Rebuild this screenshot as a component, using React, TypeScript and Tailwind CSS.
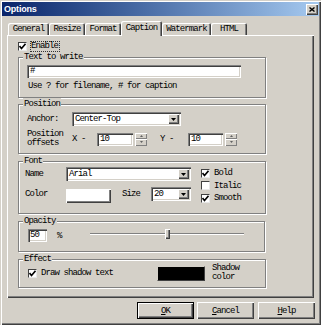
import React from "react";

const raised =
  "shadow-[inset_1px_1px_0_#fff,inset_-1px_-1px_0_#404040,inset_-2px_-2px_0_#808080]";
const sunken =
  "shadow-[inset_1px_1px_0_#808080,inset_2px_2px_0_#404040,inset_-1px_-1px_0_#fff,inset_-2px_-2px_0_#d4d0c8]";

function Check({ checked }: { checked?: boolean }) {
  return (
    <div className="w-[9px] h-[9px] shrink-0 bg-white border-t border-l border-[#404040] border-r-[#e8e8e8] border-b-[#e8e8e8] border-r border-b flex items-center justify-center">
      {checked && (
        <svg width="7" height="7" viewBox="0 0 7 7">
          <path d="M0.5 3 L2.5 5.5 L6.5 0.8" stroke="#000" strokeWidth="1.6" fill="none" />
        </svg>
      )}
    </div>
  );
}

function DropBtn() {
  return (
    <div className={`ml-auto w-[11px] h-[10px] bg-[#d4d0c8] ${raised} flex items-center justify-center`}>
      <svg width="5" height="3" viewBox="0 0 5 3">
        <polygon points="0,0 5,0 2.5,3" fill="#000" />
      </svg>
    </div>
  );
}

function Select({ value, className }: { value: string; className: string }) {
  return (
    <div className={`h-[14px] bg-white ${sunken} flex items-center pl-[3px] pr-[2px] shrink-0 ${className}`}>
      <span className="leading-[10px]">{value}</span>
      <DropBtn />
    </div>
  );
}

function Spinner() {
  return (
    <div className="ml-[2px] w-[12px] h-[13px] flex flex-col shrink-0">
      <div className="h-[6px] bg-[#d4d0c8] shadow-[inset_1px_1px_0_#fff,inset_-1px_-1px_0_#808080] flex items-center justify-center">
        <svg width="3" height="2" viewBox="0 0 3 2">
          <polygon points="0,2 3,2 1.5,0" fill="#606060" />
        </svg>
      </div>
      <div className="h-[7px] bg-[#d4d0c8] shadow-[inset_1px_1px_0_#fff,inset_-1px_-1px_0_#808080] flex items-center justify-center">
        <svg width="3" height="2" viewBox="0 0 3 2">
          <polygon points="0,0 3,0 1.5,2" fill="#606060" />
        </svg>
      </div>
    </div>
  );
}

function Group({
  title,
  className,
  children,
}: {
  title: string;
  className: string;
  children?: React.ReactNode;
}) {
  return (
    <div className={`border border-[#808080] shadow-[1px_1px_0_#fff,inset_1px_1px_0_#fff] ${className}`}>
      <div className="-mt-[7px] ml-[4px] px-[1px] w-fit bg-[#d4d0c8] leading-[12px]">{title}</div>
      {children}
    </div>
  );
}

function Tab({ label, w, selected }: { label: string; w: string; selected?: boolean }) {
  if (selected) {
    return (
      <div
        className={`${w} h-[15px] -mb-[1px] relative z-10 bg-[#d4d0c8] shadow-[inset_1px_1px_0_#fff,inset_-1px_0_0_#404040,inset_-2px_0_0_#808080] rounded-t-[2px] flex items-center justify-center pb-[1px]`}
      >
        {label}
      </div>
    );
  }
  return (
    <div
      className={`${w} h-[12px] bg-[#d4d0c8] shadow-[inset_1px_1px_0_#fff,inset_-1px_0_0_#404040,inset_-2px_0_0_#808080] rounded-t-[2px] flex items-center justify-center`}
    >
      {label}
    </div>
  );
}

function Button({ children, def, className }: { children: React.ReactNode; def?: boolean; className?: string }) {
  return (
    <div
      className={`w-[57px] h-[17px] bg-[#d4d0c8] flex items-center justify-center ${
        def ? "border border-black" : ""
      } ${raised} ${className ?? ""}`}
    >
      {children}
    </div>
  );
}

export default function App() {
  return (
    <div className="w-[321px] h-[325px] bg-[#d4d0c8] p-[2px] shadow-[inset_1px_1px_0_#d4d0c8,inset_2px_2px_0_#fff,inset_-1px_-1px_0_#404040,inset_-2px_-2px_0_#808080] font-['Liberation_Mono',monospace] text-[9px] leading-[12px] tracking-[-0.9px] text-black overflow-hidden">
      {/* Title bar */}
      <div className="h-[14px] flex items-center bg-linear-to-r from-[#0a246a] to-[#a6caf0] pl-[2px] pr-[1px]">
        <span className="font-['Liberation_Sans',Arial,sans-serif] font-bold text-[9px] tracking-[-0.2px] text-white leading-[14px]">
          Options
        </span>
        <div className={`ml-auto w-[12px] h-[11px] bg-[#d4d0c8] ${raised} flex items-center justify-center`}>
          <svg width="6" height="5" viewBox="0 0 6 5">
            <path d="M0.5 0.5 L5.5 4.5 M5.5 0.5 L0.5 4.5" stroke="#000" strokeWidth="1.4" />
          </svg>
        </div>
      </div>

      {/* Tabs */}
      <div className="h-[19px] flex items-end pl-[6px]">
        <Tab label="General" w="w-[41px]" />
        <Tab label="Resize" w="w-[36px]" />
        <Tab label="Format" w="w-[36px]" />
        <Tab label="Caption" w="w-[41px]" selected />
        <Tab label="Watermark" w="w-[49px]" />
        <Tab label="HTML" w="w-[36px]" />
      </div>

      {/* Panel */}
      <div className="ml-[5px] w-[307px] h-[263px] shadow-[inset_1px_1px_0_#fff,inset_-1px_-1px_0_#404040,inset_-2px_-2px_0_#808080] pt-[6px] pl-[11px]">
        <div className="h-[11px] flex items-center">
          <Check checked />
          <span className="ml-[3px] h-[11px] border border-dotted border-[#333] leading-[9px] pr-[1px]">Enable</span>
        </div>

        <Group title="Text to write" className="mt-[5px] w-[248px] h-[41px]">
          <div className={`mt-[2px] ml-[8px] w-[214px] h-[13px] bg-white ${sunken} pl-[3px] leading-[13px]`}>#</div>
          <div className="mt-[2px] ml-[9px]">Use ? for filename, # for caption</div>
        </Group>

        <Group title="Position" className="mt-[6px] w-[248px] h-[50px]">
          <div className="mt-[2px] h-[14px] flex items-center">
            <span className="ml-[8px] w-[45px] shrink-0">Anchor:</span>
            <Select value="Center-Top" className="w-[109px]" />
          </div>
          <div className="mt-[4px] h-[18px] flex items-center">
            <div className="ml-[8px] w-[45px] shrink-0 leading-[9px]">
              Position
              <br />
              offsets
            </div>
            <span className="w-[25px] shrink-0">X -</span>
            <div className={`w-[36px] h-[13px] bg-white ${sunken} pl-[3px] leading-[13px] shrink-0`}>10</div>
            <Spinner />
            <span className="ml-[13px] w-[28px] shrink-0">Y -</span>
            <div className={`w-[35px] h-[13px] bg-white ${sunken} pl-[3px] leading-[13px] shrink-0`}>10</div>
            <Spinner />
          </div>
        </Group>

        <Group title="Font" className="mt-[7px] w-[248px] h-[53px]">
          <div className="flex">
            <div className="flex flex-col">
              <div className="h-[14px] flex items-center">
                <span className="ml-[6px] w-[41px] shrink-0">Name</span>
                <Select value="Arial" className="w-[125px]" />
              </div>
              <div className="mt-[6px] flex items-start">
                <span className="ml-[6px] w-[41px] shrink-0 leading-[14px]">Color</span>
                <div className={`mt-[2px] w-[45px] h-[14px] bg-white ${raised} shrink-0`} />
                <span className="ml-[11px] w-[29px] shrink-0 leading-[14px]">Size</span>
                <Select value="20" className="w-[40px]" />
              </div>
            </div>
            <div className="ml-[10px] flex flex-col">
              <div className="h-[12px] flex items-center">
                <Check checked />
                <span className="ml-[4px]">Bold</span>
              </div>
              <div className="h-[13px] flex items-center">
                <Check />
                <span className="ml-[4px]">Italic</span>
              </div>
              <div className="h-[12px] flex items-center">
                <Check checked />
                <span className="ml-[4px]">Smooth</span>
              </div>
            </div>
          </div>
        </Group>

        <Group title="Opacity" className="mt-[7px] w-[247px] h-[31px]">
          <div className="mt-[2px] h-[13px] flex items-center">
            <div className={`ml-[9px] w-[19px] h-[13px] bg-white ${sunken} pl-[2px] leading-[13px] shrink-0`}>50</div>
            <span className="ml-[10px] w-[33px] shrink-0">%</span>
            <div className="relative w-[154px] h-[13px] shrink-0">
              <div className="absolute left-0 right-0 top-[4px] h-[2px] border-t border-[#808080] border-b border-b-white" />
              <div className={`absolute left-[75px] top-[0px] w-[5px] h-[10px] bg-[#d4d0c8] ${raised}`} />
            </div>
          </div>
        </Group>

        <Group title="Effect" className="mt-[7px] w-[248px] h-[29px]">
          <div className="h-[16px] flex items-center">
            <div className="ml-[9px]">
              <Check checked />
            </div>
            <span className="ml-[4px] w-[116px] shrink-0">Draw shadow text</span>
            <div className="w-[48px] h-[15px] bg-black shrink-0 border-t border-l border-[#d4d0c8] border-r border-b border-r-[#404040] border-b-[#404040]" />
            <div className="ml-[7px] leading-[9px]">
              Shadow
              <br />
              color
            </div>
          </div>
        </Group>
      </div>

      {/* Buttons */}
      <div className="mt-[4px] flex pl-[135px]">
        <Button def>
          <span className="underline">O</span>K
        </Button>
        <Button className="ml-[3px]">
          <span className="underline">C</span>ancel
        </Button>
        <Button className="ml-[4px]">
          <span className="underline">H</span>elp
        </Button>
      </div>
    </div>
  );
}
